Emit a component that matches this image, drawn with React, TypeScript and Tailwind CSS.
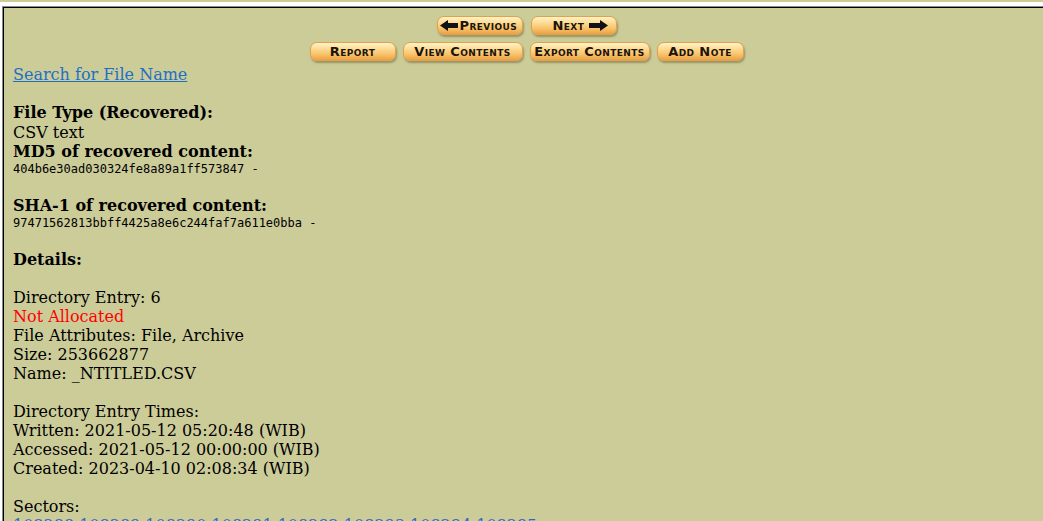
import type { ReactNode } from "react";

const serif = "font-['DejaVu_Serif',serif]";

function ArrowLeft() {
  return (
    <svg width="18" height="11" viewBox="0 0 18 11" className="shrink-0">
      <polygon points="0,5.5 8,0 8,3 18,3 18,8 8,8 8,11" fill="#111" />
    </svg>
  );
}

function ArrowRight() {
  return (
    <svg width="19" height="11" viewBox="0 0 19 11" className="shrink-0">
      <polygon points="19,5.5 11,0 11,3 0,3 0,8 11,8 11,11" fill="#111" />
    </svg>
  );
}

function NavButton({
  w,
  children,
  className = "justify-center",
}: {
  w: string;
  children: ReactNode;
  className?: string;
}) {
  return (
    <span
      className={`${w} ${className} flex h-[19px] shrink-0 items-center rounded-[7px] border border-[#e0a24c] bg-[linear-gradient(180deg,#fff2c8_0%,#fddb94_35%,#f8c066_70%,#eca043_100%)] font-['DejaVu_Sans',sans-serif] text-[13px] leading-none font-bold tracking-[0.4px] text-[#1b1409] [font-variant:small-caps] shadow-[1px_2px_2px_rgba(110,100,55,0.55)]`}
    >
      {children}
    </span>
  );
}

function Line({ h = "h-[19px]", children, className = "" }: { h?: string; children?: ReactNode; className?: string }) {
  return <div className={`${h} whitespace-nowrap ${className}`}>{children}</div>;
}

export default function App() {
  const sectors = [108288, 108289, 108290, 108291, 108292, 108293, 108294, 108295];

  return (
    <div className="h-[521px] w-full overflow-hidden bg-white">
      <div className="h-[2px] bg-[#cccc99]" />
      <div className="pt-[4px] pl-[2px]">
        <div className="border-t border-l border-[#8a8a8a]">
          <div
            className={`h-[520px] border-t border-l border-black bg-[#cccc99] pt-[8px] pl-[9px] text-[16px] leading-[19px] text-black ${serif}`}
          >
            <div className="-ml-[3px] flex flex-col items-center gap-[7px]">
              <div className="flex gap-[8px]">
                <NavButton w="w-[86px]" className="justify-start gap-[2px] pl-[2px]">
                  <ArrowLeft />
                  <span>Previous</span>
                </NavButton>
                <NavButton w="w-[86px]" className="justify-start gap-[5px] pl-[21px]">
                  <span>Next</span>
                  <ArrowRight />
                </NavButton>
              </div>
              <div className="flex gap-[7px]">
                <NavButton w="w-[86px]">Report</NavButton>
                <NavButton w="w-[120px]">View Contents</NavButton>
                <NavButton w="w-[120px]">Export Contents</NavButton>
                <NavButton w="w-[87px]">Add Note</NavButton>
              </div>
            </div>

            <div className="mt-[4px]">
              <Line>
                <a href="#" className="text-[#1f6fc4] underline">
                  Search for File Name
                </a>
              </Line>
              <Line />
              <Line h="h-[20px]" className="font-bold leading-[20px]">
                File Type (Recovered):
              </Line>
              <Line>CSV text</Line>
              <Line h="h-[20px]" className="font-bold leading-[20px]">
                MD5 of recovered content:
              </Line>
              <Line h="h-[14px]" className="font-['DejaVu_Sans_Mono',monospace] text-[12px] leading-[14px]">
                404b6e30ad030324fe8a89a1ff573847 -
              </Line>
              <Line h="h-[20px]" />
              <Line h="h-[20px]" className="font-bold leading-[20px]">
                SHA-1 of recovered content:
              </Line>
              <Line h="h-[14px]" className="font-['DejaVu_Sans_Mono',monospace] text-[12px] leading-[14px]">
                97471562813bbff4425a8e6c244faf7a611e0bba -
              </Line>
              <Line h="h-[20px]" />
              <Line h="h-[20px]" className="font-bold leading-[20px]">
                Details:
              </Line>
              <Line h="h-[18px]" />
              <Line>Directory Entry: 6</Line>
              <Line className="text-[#ff0000]">Not Allocated</Line>
              <Line>File Attributes: File, Archive</Line>
              <Line>Size: 253662877</Line>
              <Line>Name: _NTITLED.CSV</Line>
              <Line />
              <Line>Directory Entry Times:</Line>
              <Line>Written: 2021-05-12 05:20:48 (WIB)</Line>
              <Line>Accessed: 2021-05-12 00:00:00 (WIB)</Line>
              <Line>Created: 2023-04-10 02:08:34 (WIB)</Line>
              <Line />
              <Line>Sectors:</Line>
              <Line>
                {sectors.map((s, i) => (
                  <span key={s}>
                    <a href="#" className="text-[#1f6fc4] underline">
                      {s}
                    </a>
                    {i < sectors.length - 1 ? " " : ""}
                  </span>
                ))}
              </Line>
            </div>
          </div>
        </div>
      </div>
    </div>
  );
}
